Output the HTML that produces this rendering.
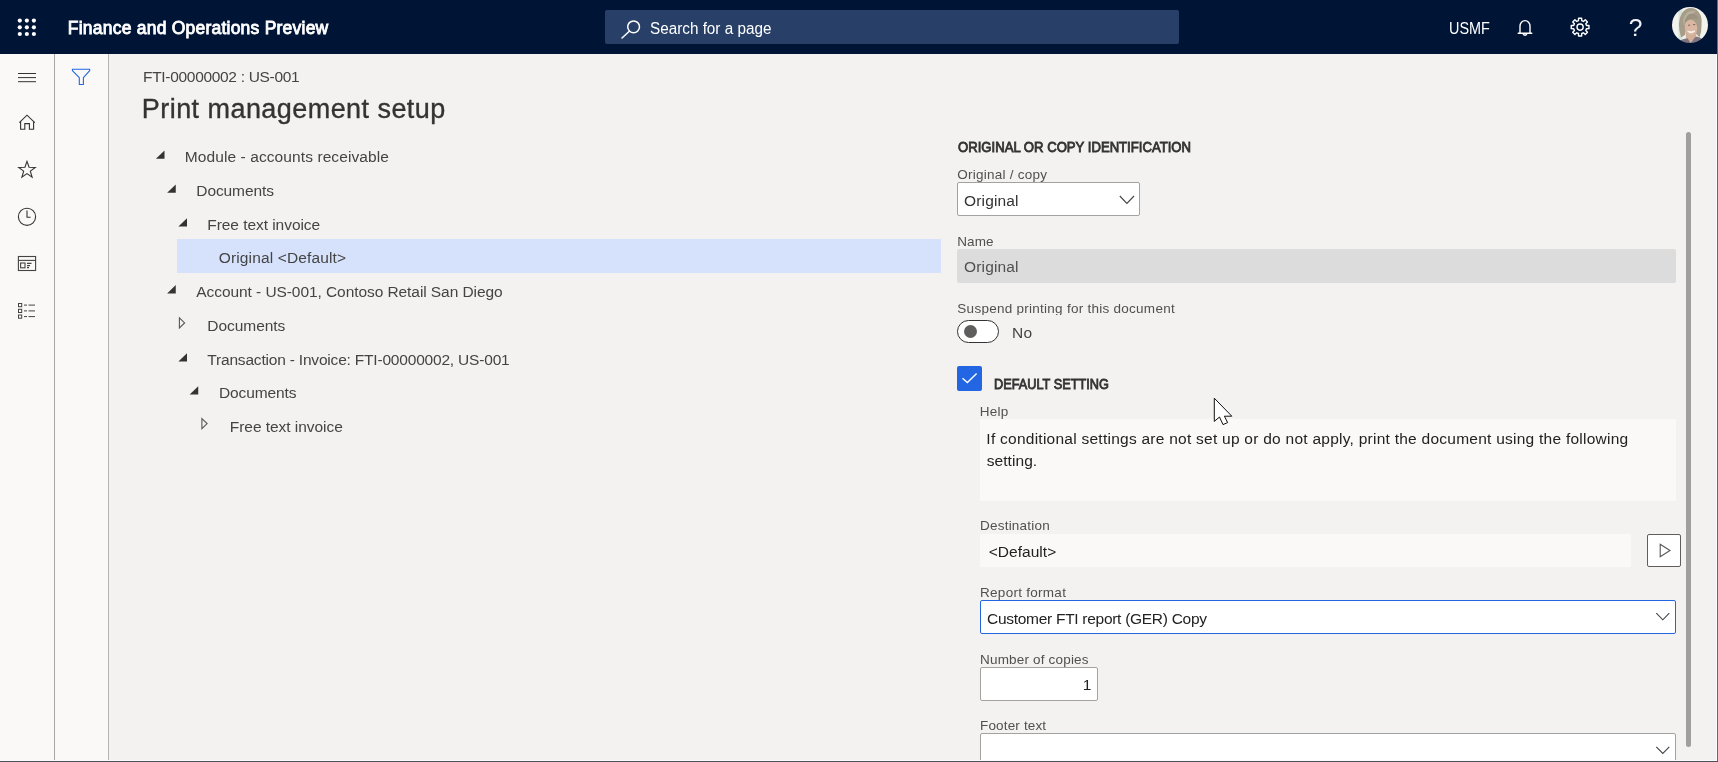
<!DOCTYPE html>
<html lang="en">
<head>
<meta charset="utf-8">
<title>Print management setup</title>
<style>
html,body{margin:0;padding:0;}
body{width:1718px;height:762px;overflow:hidden;position:relative;background:#f3f2f1;font-family:"Liberation Sans",sans-serif;}
.abs{position:absolute;box-sizing:border-box;}
.t{position:absolute;white-space:nowrap;margin:0;padding:0;}
svg{position:absolute;overflow:visible;}
#hdr{left:0;top:0;width:1717px;height:54px;background:#001435;}
#search{left:605px;top:10px;width:574px;height:34px;background:#283f68;border-radius:2px;}
#nav{left:0;top:54px;width:54px;height:707px;background:#faf9f8;}
#navb{left:54px;top:54px;width:1px;height:707px;background:#aaa8a5;}
#fpane{left:55px;top:54px;width:53px;height:707px;background:#faf9f8;}
#fpaneb{left:108px;top:54px;width:1px;height:707px;background:#b6b4b1;}
#sel{left:177px;top:239px;width:764px;height:34px;background:#d6e2fb;}
#dd1{left:957px;top:182px;width:183px;height:34px;background:#fff;border:1px solid #a3a2a0;border-radius:2px;}
#name{left:957px;top:249px;width:719px;height:34px;background:#dcdcdc;border-radius:2px;}
#tog{left:957px;top:320px;width:42px;height:23px;background:#fff;border:1.5px solid #333;border-radius:12px;}
#knob{left:964px;top:325px;width:13px;height:13px;background:#605e5c;border-radius:50%;}
#chk{left:957px;top:366px;width:25px;height:25px;background:#2266e3;border-radius:2px;}
#help{left:980px;top:419px;width:696px;height:82px;background:#faf9f8;border-radius:2px;}
#dest{left:980px;top:534px;width:651px;height:33px;background:#faf9f8;border-radius:2px;}
#play{left:1647px;top:534px;width:34px;height:33px;background:#fff;border:1px solid #605e5c;border-radius:2px;}
#rf{left:980px;top:600px;width:696px;height:34px;background:#fff;border:1.5px solid #2266e3;border-radius:2px;}
#num{left:980px;top:667px;width:118px;height:34px;background:#fff;border:1px solid #a3a2a0;border-radius:2px;}
#foot{left:980px;top:733px;width:696px;height:34px;background:#fff;border:1px solid #a3a2a0;border-radius:2px;}
#sb{left:1686px;top:132px;width:5px;height:615px;background:#a19f9d;border-radius:3px;}
#edgeR{left:1717px;top:0;width:1px;height:762px;background:#6b6b6b;}
#edgeR2{left:1716px;top:54px;width:1px;height:707px;background:#fbfbfb;}
#edgeB2{left:0;top:760px;width:1717px;height:1px;background:#fbfbfb;}
#edgeB{left:0;top:761px;width:1718px;height:1px;background:#4d525c;}
</style>
</head>
<body>
<div class="abs" id="hdr"></div>
<div class="abs" id="search"></div>
<div class="abs" id="nav"></div>
<div class="abs" id="navb"></div>
<div class="abs" id="fpane"></div>
<div class="abs" id="fpaneb"></div>
<div class="abs" id="sel"></div>
<div class="abs" id="dd1"></div>
<div class="abs" id="name"></div>
<div class="abs" id="tog"></div>
<div class="abs" id="knob"></div>
<div class="abs" id="chk"></div>
<div class="abs" id="help"></div>
<div class="abs" id="dest"></div>
<div class="abs" id="play"></div>
<div class="abs" id="rf"></div>
<div class="abs" id="num"></div>
<div class="abs" id="foot"></div>
<div class="abs" id="sb"></div>
<svg width="1718" height="762" viewBox="0 0 1718 762" style="left:0;top:0">
<circle cx="19.8" cy="20.6" r="2.1" fill="#fff"/>
<circle cx="26.85" cy="20.6" r="2.1" fill="#fff"/>
<circle cx="33.9" cy="20.6" r="2.1" fill="#fff"/>
<circle cx="19.8" cy="27.3" r="2.1" fill="#fff"/>
<circle cx="26.85" cy="27.3" r="2.1" fill="#fff"/>
<circle cx="33.9" cy="27.3" r="2.1" fill="#fff"/>
<circle cx="19.8" cy="34.0" r="2.1" fill="#fff"/>
<circle cx="26.85" cy="34.0" r="2.1" fill="#fff"/>
<circle cx="33.9" cy="34.0" r="2.1" fill="#fff"/>
<g fill="none" stroke="#fff" stroke-width="1.5" stroke-linecap="round"><circle cx="633.6" cy="26.8" r="5.9"/><path d="M629.3 31.2 L622 38"/></g>
<g fill="none" stroke="#fff" stroke-width="1.4" stroke-linejoin="round" stroke-linecap="round"><path d="M1518.2 33.2 H1531.8 M1520 33 V26.2 a5 5.6 0 0 1 10 0 V33"/><path d="M1523.3 34 a1.8 1.8 0 0 0 3.4 0"/></g>
<g fill="none" stroke="#fff" stroke-width="1.4" stroke-linejoin="round"><polygon points="1586.49,25.46 1588.97,25.55 1588.97,28.65 1586.49,28.74 1585.78,30.46 1587.46,32.28 1585.28,34.46 1583.46,32.78 1581.74,33.49 1581.65,35.97 1578.55,35.97 1578.46,33.49 1576.74,32.78 1574.92,34.46 1572.74,32.28 1574.42,30.46 1573.71,28.74 1571.23,28.65 1571.23,25.55 1573.71,25.46 1574.42,23.74 1572.74,21.92 1574.92,19.74 1576.74,21.42 1578.46,20.71 1578.55,18.23 1581.65,18.23 1581.74,20.71 1583.46,21.42 1585.28,19.74 1587.46,21.92 1585.78,23.74"/><circle cx="1580.1" cy="27.1" r="3.1"/></g>
<path d="M18 73.5 H36 M18 77.6 H36 M18 81.7 H36" stroke="#333" stroke-width="1" fill="none"/>
<path d="M72.4 69.3 H89.7 V70.6 L83.4 77.6 V84.5 H79.3 V77.6 L72.4 70.6 Z" fill="none" stroke="#2266e3" stroke-width="1.1" stroke-linejoin="round"/>
<g fill="none" stroke="#333" stroke-width="1.1" stroke-linejoin="miter"><path d="M19.3 122.7 L27 115.2 L34.8 122.7"/><path d="M20.6 121.6 V129.3 H24.8 V123.6 H29.4 V129.3 H33.6 V121.6"/></g>
<polygon points="27.00,161.40 29.06,167.27 35.27,167.41 30.33,171.18 32.11,177.14 27.00,173.60 21.89,177.14 23.67,171.18 18.73,167.41 24.94,167.27" fill="none" stroke="#333" stroke-width="1.1" stroke-linejoin="miter"/>
<g fill="none" stroke="#333" stroke-width="1.1"><circle cx="27" cy="216.8" r="8.6"/><path d="M27 210.5 V217.3 H30.6"/></g>
<g fill="none" stroke="#444" stroke-width="1.1"><rect x="18.4" y="256.5" width="17.2" height="14"/><path d="M18.4 260.4 H35.6"/><rect x="20.6" y="263" width="4.4" height="4.8"/><path d="M27 263.4 H31.5 M27 265.6 H30 M27 267.6 H29"/></g>
<g fill="none" stroke="#444" stroke-width="1"><rect x="18.5" y="303.5" width="3.2" height="3.2"/><rect x="18.5" y="309.3" width="3.2" height="3.2"/><rect x="18.5" y="315" width="3.2" height="3.2"/><path d="M24 305.1 H27 M28.5 305.1 H35 M24 310.9 H27 M28.5 310.9 H35 M24 316.6 H27 M28.5 316.6 H35"/></g>
<polygon points="164.50,150.40 164.50,158.70 155.90,158.70" fill="#333"/>
<polygon points="175.75,184.40 175.75,192.70 167.15,192.70" fill="#333"/>
<polygon points="187.00,218.20 187.00,226.50 178.40,226.50" fill="#333"/>
<polygon points="175.75,285.10 175.75,293.40 167.15,293.40" fill="#333"/>
<polygon points="179.40,317.90 184.60,322.90 179.40,327.90" fill="none" stroke="#555" stroke-width="1.1" stroke-linejoin="miter"/>
<polygon points="187.00,353.20 187.00,361.50 178.40,361.50" fill="#333"/>
<polygon points="198.25,386.30 198.25,394.60 189.65,394.60" fill="#333"/>
<polygon points="201.90,418.60 207.10,423.60 201.90,428.60" fill="none" stroke="#555" stroke-width="1.1" stroke-linejoin="miter"/>
<g fill="none" stroke="#444" stroke-width="1.1"><path d="M1119.8 196 L1126.9 203.4 L1134 196"/><path d="M1656.3 613.2 L1662.8 619.8 L1669.3 613.2"/><path d="M1656.3 746.9 L1662.8 753.5 L1669.3 746.9"/></g>
<path d="M962.5 378.2 L967.4 382.6 L976.6 373.6" fill="none" stroke="#fff" stroke-width="1.4"/>
<polygon points="1660.2,544.3 1670,550.5 1660.2,556.8" fill="none" stroke="#555" stroke-width="1.1"/>
<defs><clipPath id="av"><circle cx="1690" cy="25" r="18"/></clipPath><filter id="avb" x="-10%" y="-10%" width="120%" height="120%"><feGaussianBlur stdDeviation="0.7"/></filter></defs>
<g clip-path="url(#av)"><g filter="url(#avb)"><rect x="1670" y="5" width="40" height="40" fill="#f3f2ed"/><rect x="1678.5" y="5" width="4" height="40" fill="#d9e3da"/><path d="M1681 37.5 Q1676.5 22 1682 13 Q1688 5.5 1696 9.5 Q1703 14 1701.5 26 Q1701.5 33 1699.5 37.5 L1695.5 33 L1694 28 L1686 29 L1685 35 L1681 37.5 Z" fill="#a59c89"/><path d="M1685.5 30 L1686 40 L1696 40 L1696.5 30 Z" fill="#cfae98"/><path d="M1683 20 Q1686 9 1696 11 Q1691 14 1689 19 Q1686 21 1684 26 Z" fill="#b9b09d"/><ellipse cx="1691" cy="27.6" rx="6.2" ry="8" fill="#d9b7a2" transform="rotate(-8 1691 27.6)"/><path d="M1684.5 24 Q1688 16.5 1697.5 19 Q1698.5 15 1692 13.5 Q1685 14 1684.5 24 Z" fill="#9c927f"/><path d="M1687.6 31.2 Q1691.2 34.6 1695 30.8 Q1691.2 32.4 1687.6 31.2 Z" fill="#fff" stroke="#fff" stroke-width="0.6"/><path d="M1688 25.2 h2.2 M1693 24.6 h2.2" stroke="#6e5a4e" stroke-width="0.9"/><path d="M1676 45 Q1681 37.5 1688 38.5 L1691 42 L1696 36.5 Q1703 37 1706 45 Z" fill="#7f7680"/><path d="M1686.5 36 L1690.5 43 L1695 35.5 Z" fill="#d2b09a"/></g></g>
<path d="M1214.3 398.2 V421.4 L1219.5 417 L1223 424.6 L1227.6 422.6 L1224.4 416.2 H1231.8 Z" fill="#fff" stroke="#111" stroke-width="1" stroke-linejoin="miter"/>
</svg>
<div id="txt" style="position:absolute;left:0;top:0;width:1718px;height:762px;will-change:transform">
<div class="t" id="t_app" style="left:67.80px;top:16.00px;font-size:17.5px;line-height:24px;font-weight:400;color:#fff;letter-spacing:0.226px;-webkit-text-stroke:0.85px #fff">Finance and Operations Preview</div>
<div class="t" id="t_search" style="left:649.70px;top:18.00px;font-size:16px;line-height:22px;font-weight:400;color:#fff;letter-spacing:0.000px;transform:scaleX(0.9545);transform-origin:0 0">Search for a page</div>
<div class="t" id="t_usmf" style="left:1449.41px;top:17.00px;font-size:16.3px;line-height:23px;font-weight:400;color:#fff;letter-spacing:0.000px;transform:scaleX(0.8854);transform-origin:0 0">USMF</div>
<div class="t" id="t_crumb" style="left:143.05px;top:66.00px;font-size:15.5px;line-height:22px;font-weight:400;color:#444;letter-spacing:-0.311px">FTI-00000002 : US-001</div>
<div class="t" id="t_title" style="left:141.85px;top:90.00px;font-size:27px;line-height:38px;font-weight:400;color:#333;letter-spacing:0.441px;-webkit-text-stroke:0.35px #333">Print management setup</div>
<div class="t" id="t_r1" style="left:184.75px;top:146.00px;font-size:15.5px;line-height:22px;font-weight:400;color:#444;letter-spacing:0.093px">Module - accounts receivable</div>
<div class="t" id="t_r2" style="left:196.35px;top:180.00px;font-size:15.5px;line-height:22px;font-weight:400;color:#444;letter-spacing:-0.105px">Documents</div>
<div class="t" id="t_r3" style="left:207.25px;top:214.00px;font-size:15.5px;line-height:22px;font-weight:400;color:#444;letter-spacing:-0.050px">Free text invoice</div>
<div class="t" id="t_r4" style="left:218.75px;top:247.00px;font-size:15.5px;line-height:22px;font-weight:400;color:#444;letter-spacing:0.142px">Original &lt;Default&gt;</div>
<div class="t" id="t_r5" style="left:196.35px;top:281.00px;font-size:15.5px;line-height:22px;font-weight:400;color:#444;letter-spacing:-0.073px">Account - US-001, Contoso Retail San Diego</div>
<div class="t" id="t_r6" style="left:207.25px;top:315.00px;font-size:15.5px;line-height:22px;font-weight:400;color:#444;letter-spacing:-0.043px">Documents</div>
<div class="t" id="t_r7" style="left:207.35px;top:349.00px;font-size:15.5px;line-height:22px;font-weight:400;color:#444;letter-spacing:-0.193px">Transaction - Invoice: FTI-00000002, US-001</div>
<div class="t" id="t_r8" style="left:218.95px;top:382.00px;font-size:15.5px;line-height:22px;font-weight:400;color:#444;letter-spacing:-0.105px">Documents</div>
<div class="t" id="t_r9" style="left:229.85px;top:416.00px;font-size:15.5px;line-height:22px;font-weight:400;color:#444;letter-spacing:-0.050px">Free text invoice</div>
<div class="t" id="t_h1" style="left:958.25px;top:137.00px;font-size:14.2px;line-height:20px;font-weight:400;color:#333;letter-spacing:0.000px;-webkit-text-stroke:0.85px #333;transform:scaleX(0.9247);transform-origin:0 0">ORIGINAL OR COPY IDENTIFICATION</div>
<div class="t" id="t_l1" style="left:957.35px;top:165.00px;font-size:13.5px;line-height:19px;font-weight:400;color:#505050;letter-spacing:0.233px;height:16.60px;overflow:hidden">Original / copy</div>
<div class="t" id="t_v1" style="left:964.05px;top:190.00px;font-size:15.5px;line-height:22px;font-weight:400;color:#333;letter-spacing:0.148px">Original</div>
<div class="t" id="t_l2" style="left:957.25px;top:232.00px;font-size:13.5px;line-height:19px;font-weight:400;color:#505050;letter-spacing:0.099px;height:16.60px;overflow:hidden">Name</div>
<div class="t" id="t_v2" style="left:964.05px;top:256.00px;font-size:15.5px;line-height:22px;font-weight:400;color:#505050;letter-spacing:0.148px">Original</div>
<div class="t" id="t_l3" style="left:957.35px;top:299.00px;font-size:13.5px;line-height:19px;font-weight:400;color:#505050;letter-spacing:0.264px;height:15.60px;overflow:hidden">Suspend printing for this document</div>
<div class="t" id="t_no" style="left:1011.95px;top:322.00px;font-size:15.5px;line-height:22px;font-weight:400;color:#444;letter-spacing:0.406px">No</div>
<div class="t" id="t_h2" style="left:993.65px;top:374.00px;font-size:14.2px;line-height:20px;font-weight:400;color:#333;letter-spacing:0.000px;-webkit-text-stroke:0.85px #333;transform:scaleX(0.8978);transform-origin:0 0">DEFAULT SETTING</div>
<div class="t" id="t_l4" style="left:979.75px;top:402.00px;font-size:13.5px;line-height:19px;font-weight:400;color:#505050;letter-spacing:0.248px;height:16.60px;overflow:hidden">Help</div>
<div class="t" id="t_help1" style="left:986.35px;top:428.00px;font-size:15.5px;line-height:22px;font-weight:400;color:#222;letter-spacing:0.253px">If conditional settings are not set up or do not apply, print the document using the following</div>
<div class="t" id="t_help2" style="left:986.75px;top:450.00px;font-size:15.5px;line-height:22px;font-weight:400;color:#222;letter-spacing:0.062px">setting.</div>
<div class="t" id="t_l5" style="left:980.05px;top:516.00px;font-size:13.5px;line-height:19px;font-weight:400;color:#505050;letter-spacing:0.207px;height:16.60px;overflow:hidden">Destination</div>
<div class="t" id="t_v5" style="left:988.75px;top:541.00px;font-size:15.5px;line-height:22px;font-weight:400;color:#222;letter-spacing:0.030px">&lt;Default&gt;</div>
<div class="t" id="t_l6" style="left:980.05px;top:583.00px;font-size:13.5px;line-height:19px;font-weight:400;color:#505050;letter-spacing:0.277px;height:16.60px;overflow:hidden">Report format</div>
<div class="t" id="t_v6" style="left:987.05px;top:608.00px;font-size:15.5px;line-height:22px;font-weight:400;color:#222;letter-spacing:-0.286px">Customer FTI report (GER) Copy</div>
<div class="t" id="t_l7" style="left:980.05px;top:650.00px;font-size:13.5px;line-height:19px;font-weight:400;color:#505050;letter-spacing:0.177px;height:16.60px;overflow:hidden">Number of copies</div>
<div class="t" id="t_v7" style="left:1082.70px;top:674.00px;font-size:15.5px;line-height:22px;font-weight:400;color:#222;letter-spacing:0.000px">1</div>
<div class="t" id="t_l8" style="left:980.05px;top:716.00px;font-size:13.5px;line-height:19px;font-weight:400;color:#505050;letter-spacing:0.152px;height:16.60px;overflow:hidden">Footer text</div>
<div class="t" id="t_q" style="left:1628.70px;top:11.00px;font-size:24.5px;line-height:34px;font-weight:400;color:#f0f2f6;letter-spacing:0.000px">?</div>
</div>
<div class="abs" id="edgeR2"></div>
<div class="abs" id="edgeB2"></div>
<div class="abs" id="edgeR"></div>
<div class="abs" id="edgeB"></div>
</body>
</html>
